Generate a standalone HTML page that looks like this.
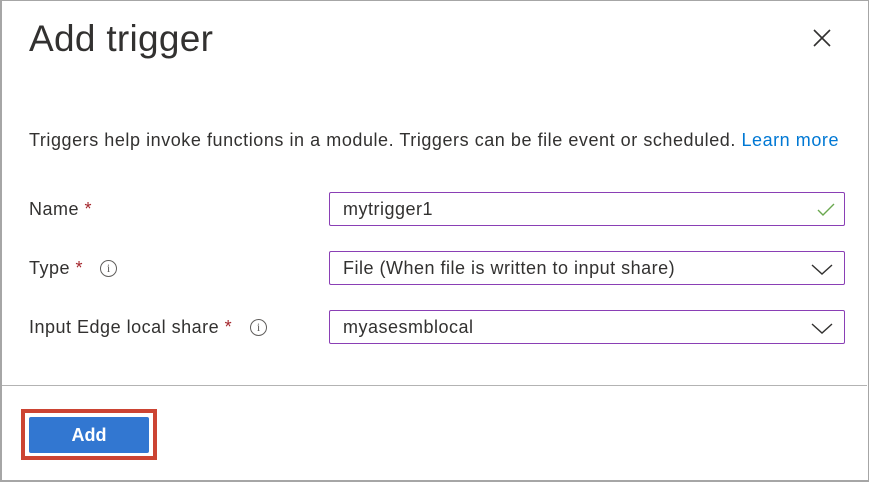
<!DOCTYPE html>
<html><head><style>
html,body{margin:0;padding:0}
body{width:869px;height:482px;position:relative;overflow:hidden;background:#fff;font-family:"Liberation Sans",sans-serif;color:#323130}
.frame{position:absolute;left:0;top:0;width:866px;height:479px;border:1px solid #a6a6a6;border-width:1px 2px 2px 2px}
.t{position:absolute;white-space:nowrap;font-size:18px;letter-spacing:0.5px}
.inp{position:absolute;left:329px;width:516px;height:34px;border:1px solid #8a3fb5;border-radius:2px;box-sizing:border-box}
.inp span{position:absolute;left:13px;top:6px;font-size:18px;letter-spacing:0.5px;color:#323130;white-space:nowrap}
.req{color:#a4262c}
.info{position:absolute;width:17px;height:17px;border:1.3px solid #605e5c;border-radius:50%;box-sizing:border-box;font-size:12px;text-align:center;line-height:15px;color:#605e5c;font-family:"Liberation Serif",serif}
</style></head><body>
<div class="frame"></div>
<div class="t" style="left:29px;top:18px;font-size:37px;letter-spacing:0.3px;color:#323130">Add trigger</div>
<svg style="position:absolute;left:812px;top:28px" width="20" height="20"><path d="M2 2L18 18M18 2L2 18" stroke="#323130" stroke-width="1.6"/></svg>
<div class="t" style="left:29px;top:130px;letter-spacing:0.55px">Triggers help invoke functions in a module. Triggers can be file event or scheduled. <span style="color:#0078d4">Learn more</span></div>
<div class="t" style="left:29px;top:199px">Name <span class="req">*</span></div>
<div class="t" style="left:29px;top:258px">Type <span class="req">*</span></div>
<div class="info" style="left:100px;top:260px">i</div>
<div class="t" style="left:29px;top:317px">Input Edge local share <span class="req">*</span></div>
<div class="info" style="left:250px;top:319px">i</div>
<div class="inp" style="top:192px"><span>mytrigger1</span>
<svg style="position:absolute;right:9px;top:9px" width="18" height="16"><path d="M1 8L6 13L17 2" fill="none" stroke="#6aa84f" stroke-width="1.4"/></svg></div>
<div class="inp" style="top:251px"><span>File (When file is written to input share)</span>
<svg style="position:absolute;right:11px;top:10px" width="22" height="14"><path d="M1 3L11 12L21 3" fill="none" stroke="#323130" stroke-width="1.4"/></svg></div>
<div class="inp" style="top:310px"><span>myasesmblocal</span>
<svg style="position:absolute;right:11px;top:10px" width="22" height="14"><path d="M1 3L11 12L21 3" fill="none" stroke="#323130" stroke-width="1.4"/></svg></div>
<div style="position:absolute;left:2px;top:385px;width:865px;height:1px;background:#b3b3b3"></div>
<div style="position:absolute;left:21px;top:409px;width:136px;height:51px;box-sizing:border-box;border:4px solid #cc4433"></div>
<div style="position:absolute;left:29px;top:417px;width:120px;height:36px;background:#3277d1;border-radius:2px;color:#fff;font-weight:bold;font-size:18px;text-align:center;line-height:36px">Add</div>
</body></html>
